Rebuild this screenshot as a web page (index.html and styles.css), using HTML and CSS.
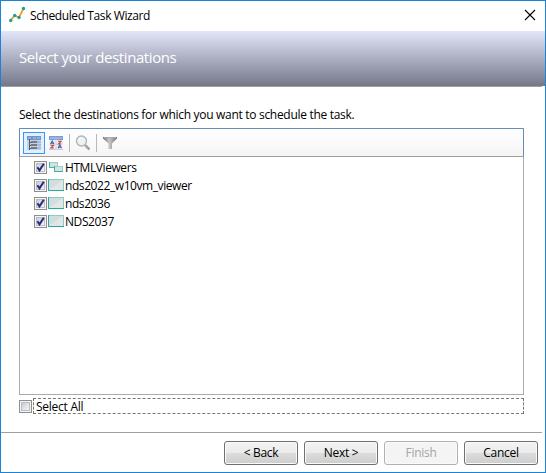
FILE: index.html
```html
<!DOCTYPE html>
<html lang="en">
<head>
<meta charset="utf-8">
<title>Scheduled Task Wizard</title>
<link rel="stylesheet" href="styles.css">
</head>
<body>
<svg class="defs" width="0" height="0" aria-hidden="true">
  <defs>
    <linearGradient id="box" x1="0" y1="0" x2="1" y2="1"><stop offset="0" stop-color="#c3c8d2"/><stop offset="1" stop-color="#fafafb"/></linearGradient>
    <linearGradient id="screen-fill" x1="0" y1="0" x2="1" y2="1"><stop offset="0" stop-color="#d3dddd"/><stop offset=".5" stop-color="#d3dddd"/><stop offset=".5" stop-color="#e1e6e6"/><stop offset="1" stop-color="#e1e6e6"/></linearGradient>
    <linearGradient id="funnel" x1="0" x2="1"><stop offset="0" stop-color="#707070"/><stop offset=".45" stop-color="#c8c8c8"/><stop offset="1" stop-color="#777"/></linearGradient>
    <symbol id="empty" viewBox="0 0 13 13"><rect x=".5" y=".5" width="12" height="12" fill="#f4f4f4" stroke="#8e8f8f"/><rect x="2.5" y="2.5" width="8" height="8" fill="url(#box)" stroke="#b9bdc6"/></symbol>
    <symbol id="checked" viewBox="0 0 13 13"><use href="#empty"/><path d="M3.4 6.2 5.500 9.400 9.800 2.800" fill="none" stroke="#2b2b78" stroke-width="2"/></symbol>
    <symbol id="screen" viewBox="0 0 16 12"><rect x=".5" y=".5" width="15" height="11" fill="url(#screen-fill)" stroke="#8fcac4"/><path d="M.5 0V11.5H16" fill="none" stroke="#2aaa9f"/></symbol>
    <symbol id="group" viewBox="0 0 16 12"><rect x="1.5" y="1.5" width="8" height="5" fill="#d5dfdf" stroke="#98ceca"/><path d="M1.5 1V6.5H7" fill="none" stroke="#45b5ab"/><rect x="6.500" y="5.500" width="8" height="5" fill="#d9e2e2" stroke="#98ceca"/><path d="M6.500 5V10.500H15" fill="none" stroke="#36b0a5"/></symbol>
  </defs>
</svg>
<div class="window">
  <header class="titlebar">
    <svg class="logo" width="18" height="18" viewBox="0 0 18 18"><path d="M1.500 14.500 5.500 9.500 10 11.500 14.500 2.500" fill="none" stroke="#f09a1c" stroke-width="1.700"/><g fill="#16a394"><circle cx="1.700" cy="14.500" r="1.700"/><circle cx="5.700" cy="9.500" r="1.700"/><circle cx="10" cy="11.500" r="1.700"/><circle cx="14.500" cy="2.500" r="1.700"/></g></svg>
    <span class="title">Scheduled Task Wizard</span>
    <svg class="close" width="10" height="10" viewBox="0 0 10 10"><path d="M0 0 10 10M10 0 0 10" stroke="#000" stroke-width="1.100"/></svg>
  </header>
  <div class="banner"><h1>Select your destinations</h1></div>
  <main class="content">
    <p class="prompt">Select the destinations for which you want to schedule the task.</p>
    <section class="panel">
      <div class="toolbar">
        <span class="tool active"><svg width="16" height="16" viewBox="0 0 16 16"><path d="M1 1h14v14H1z" fill="#c4d2e8"/><path d="M1 1h14v4H1z" fill="#6f93ca"/><path d="M2 3h3M7 3h3M11 3h3" stroke="#b7caea"/><path d="M3.500 4v11M3.500 7.500H6M3.500 10.500H6M3.500 13.500H6" stroke="#555c66" fill="none"/><path d="M5 6h6v2H5zM5 9h6v2H5zM5 12h6v2H5z" fill="#727b86"/><path d="M11 7h4M11 10h4M11 13h4" stroke="#89a3c8"/></svg></span>
        <span class="tool"><svg width="16" height="16" viewBox="0 0 16 16"><path d="M1 2h14v13H1z" fill="#eef1f8"/><path d="M1 1h14v4H1z" fill="#7c9bd0"/><path d="M2 3h5M9 3h5" stroke="#bccdea"/><path d="M8 2v13M1 14.500h14" stroke="#c2cde2"/><g fill="none" stroke-width="1.100"><path d="M2.500 9.300 4.200 6 6 9.300M3 8.300h3M10 13.300 11.700 10 13.500 13.300M10.500 12.300h3" stroke="#405f98"/><path d="M10 6.300h3L10.300 9h3.200M2.500 10.300h3L2.800 13H6" stroke="#c04044"/></g></svg></span>
        <i class="divider"></i>
        <span class="tool"><svg width="16" height="16" viewBox="0 0 16 16"><path d="m10 10 4.500 4.500" stroke="#a5a5a5" stroke-width="2.500"/><circle cx="6.500" cy="6" r="5" fill="#edf2f5" stroke="#b1b5b8" stroke-width="1.400"/><path d="M3.500 6a3 3 0 0 1 3-3" fill="none" stroke="#fff"/></svg></span>
        <i class="divider"></i>
        <span class="tool"><svg width="16" height="16" viewBox="0 0 16 16"><path d="M1 2h14v1.500L10 8.500V14H6.500V8.500L1 3.500z" fill="url(#funnel)"/><path d="M2 2.500h12" stroke="#aaa"/></svg></span>
      </div>
      <ul class="list">
        <li><svg class="check"><use href="#checked"/></svg><svg class="node"><use href="#group"/></svg><span>HTMLViewers</span></li>
        <li><svg class="check"><use href="#checked"/></svg><svg class="node"><use href="#screen"/></svg><span>nds2022_w10vm_viewer</span></li>
        <li><svg class="check"><use href="#checked"/></svg><svg class="node"><use href="#screen"/></svg><span>nds2036</span></li>
        <li><svg class="check"><use href="#checked"/></svg><svg class="node"><use href="#screen"/></svg><span>NDS2037</span></li>
      </ul>
    </section>
    <div class="select-all"><svg class="check"><use href="#empty"/></svg><span class="focus">Select All</span></div>
  </main>
  <footer class="actions"><button>&lt; Back</button><button>Next &gt;</button><button disabled>Finish</button><button>Cancel</button></footer>
</div>
</body>
</html>
```

FILE: styles.css
```css
* { box-sizing: border-box; }
body { margin: 0; font: 12px/18px "Open Sans", "Noto Sans", sans-serif; color: #000; }
.defs { position: absolute; }
.window { width: 546px; height: 473px; border: 1px solid #1883d7; background: #fff; display: flex; flex-direction: column; }
.titlebar { height: 30px; flex: none; display: flex; align-items: center; padding: 0 10px 0 8px; }
.logo { margin-right: 3px; margin-top: -2px; }
.title { letter-spacing: -.4px; white-space: nowrap; }
.close { margin-left: auto; margin-top: -2px; overflow: visible; }
.banner { height: 56px; flex: none; padding: 14px 0 0 18px; background: linear-gradient(#a0a0a0, #a0a0a0) 0 100% / 541px 1px no-repeat, linear-gradient(#e3e6fa, #747889) 0 0 / 100% 55px no-repeat; }
h1 { margin: 0; font-size: 15px; line-height: 24px; font-weight: 400; color: #fff; letter-spacing: -.4px; }
.content { height: 345px; flex: none; padding: 19px 21px 0 18px; }
.prompt { margin: 0 0 4px; letter-spacing: -.3px; white-space: nowrap; }
.panel { height: 267px; border: 1px solid #a9abad; border-top-color: #688caf; }
.toolbar { height: 28px; margin: 0 -1px; display: flex; align-items: center; padding-left: 3px; background: linear-gradient(#fdfcff, #fbfbfe 50%, #f4f4f4); border: 1px solid #688caf; border-width: 0 1px 1px; border-bottom-color: #a0a0a0; }
.tool { width: 22px; height: 22px; display: flex; align-items: center; justify-content: center; }
.tool.active { border: 1px solid #3399ff; background: #e3effb; }
.divider { width: 1px; height: 18px; margin: 0 2px; background: #b8b8b8; }
.list { list-style: none; margin: 0; padding: 2px 0 0 14px; }
.list li { height: 18px; display: flex; align-items: center; white-space: nowrap; }
.check { width: 13px; height: 13px; flex: none; }
.list .check { margin-top: -1px; }
.node { width: 16px; height: 12px; margin: -2px 1px 0; flex: none; }
.list span { letter-spacing: -.42px; }
.select-all { height: 16px; margin-top: 3px; display: flex; align-items: flex-start; }
.select-all .check { margin-top: 2px; }
.focus { flex: 1; height: 16px; margin-left: 1px; padding-left: 2px; border: 1px dashed #777; line-height: 16px; letter-spacing: -.25px; }
.actions { width: 541px; height: 39px; border-top: 1px solid #a0a0a0; display: flex; justify-content: flex-end; gap: 6px; padding: 8px 4px 0 0; }
button { width: 74px; height: 24px; padding: 0 0 1px; border: 1px solid #707070; border-radius: 3px; background: linear-gradient(#f3f3f3, #ebebeb 50%, #dddddd 50%, #cdcdcd); box-shadow: inset 0 0 0 1px #fafafa; color: #000; font: inherit; letter-spacing: -.3px; }
button:disabled { border-color: #adb2b5; background: #f4f4f4; color: #a5a5a5; }
```
